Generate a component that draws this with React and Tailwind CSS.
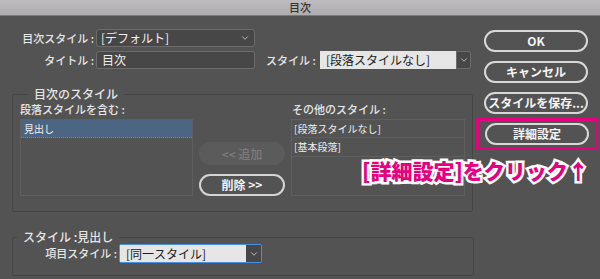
import { ChevronDown } from 'lucide-react';

const jp = { fontFamily: '"Noto Sans CJK JP", "Noto Sans", sans-serif' };

function RoundButton({ children, disabled }) {
  if (disabled) {
    return (
      <div className="w-[86px] h-[23px] rounded-full bg-[#5b5b5b] flex items-center justify-center text-[12px] text-[#7c7c7c] font-medium">
        {children}
      </div>
    );
  }
  return (
    <div className="w-[86px] h-[22px] rounded-full border-2 border-[#d4d4d4] flex items-center justify-center text-[12px] text-[#f2f2f2] font-bold">
      {children}
    </div>
  );
}

function SideButton({ children }) {
  return (
    <div className="w-[104px] h-[22px] rounded-full border-2 border-[#d8d8d8] flex items-center justify-center text-[12px] text-[#f4f4f4] font-bold whitespace-nowrap">
      {children}
    </div>
  );
}

export default function App() {
  return (
    <div style={jp} className="relative w-[600px] h-[279px] bg-[#535353] overflow-hidden text-[#e6e6e6]">
      {/* title bar */}
      <div className="h-[16px] bg-gradient-to-b from-[#bebcbe] to-[#aeacae] border-b border-[#7a7a7a] flex items-center justify-center text-[11px] text-[#333] font-medium leading-none">
        目次
      </div>

      <div className="flex">
        {/* left column */}
        <div className="w-[476px] pl-[12px] pt-[13px]">
          <div className="flex items-center h-[18px]">
            <div className="w-[82px] text-right text-[11px] font-medium leading-none whitespace-nowrap">目次スタイル :</div>
            <div className="ml-[2px] w-[159px] h-[18px] rounded-[3px] border border-[#6c6c6c] bg-[#474747] flex items-center pl-[4px] pr-[4px] text-[12px] text-[#f0f0f0] leading-none">
              <span className="flex-1">[デフォルト]</span>
              <ChevronDown size={10} strokeWidth={2} className="text-[#cfcfcf]" />
            </div>
          </div>

          <div className="flex items-center h-[18px] mt-[4px]">
            <div className="w-[82px] text-right text-[11px] font-medium leading-none whitespace-nowrap">タイトル :</div>
            <div className="ml-[2px] w-[159px] h-[18px] rounded-[3px] border border-[#6c6c6c] bg-[#474747] flex items-center pl-[5px] text-[12px] text-[#f0f0f0] leading-none">
              目次
            </div>
            <div className="ml-[11px] text-[11px] font-medium leading-none w-[54px] whitespace-nowrap">スタイル :</div>
            <div className="flex h-[18px]">
              <div className="w-[136px] h-[18px] bg-[#e6e6e6] flex items-center pl-[6px] text-[12px] text-[#222] leading-none">
                [段落スタイルなし]
              </div>
              <div className="w-[15px] h-[18px] bg-[#474747] border border-[#6c6c6c] rounded-r-[3px] flex items-center justify-center">
                <ChevronDown size={10} strokeWidth={2} className="text-[#cfcfcf]" />
              </div>
            </div>
          </div>

          {/* group 1 */}
          <fieldset className="mt-[19px] w-[460px] h-[124px] border border-[#454545] rounded-[2px] pl-[7px] pr-[7px]">
            <legend className="ml-[8px] px-[6px] text-[12px] font-medium leading-[12px]">目次のスタイル</legend>
            <div className="flex mt-[4px]">
              <div className="w-[173px]">
                <div className="text-[11px] font-medium leading-none h-[15px] whitespace-nowrap">段落スタイルを含む :</div>
                <div className="h-[77px] border border-[#5f5f5f] bg-[#535353]">
                  <div className="h-[18px] bg-[#4b6582] border-b border-dotted border-[#6c86a3] flex items-center pl-[3px] text-[10px] text-[#f2f2f2] leading-none">
                    見出し
                  </div>
                </div>
              </div>
              <div className="w-[98px] flex flex-col items-center pt-[38px] gap-[9px]">
                <RoundButton disabled>&lt;&lt; 追加</RoundButton>
                <RoundButton>削除 &gt;&gt;</RoundButton>
              </div>
              <div className="w-[174px]">
                <div className="text-[11px] font-medium leading-none h-[15px] pl-[1px] whitespace-nowrap">その他のスタイル :</div>
                <div className="h-[77px] border border-[#5f5f5f] bg-[#535353]">
                  <div className="h-[18px] border-b border-[#5f5f5f] flex items-center pl-[2px] text-[10px] text-[#f0f0f0] leading-none">
                    [段落スタイルなし]
                  </div>
                  <div className="h-[19px] border-b border-[#5f5f5f] flex items-center pl-[2px] text-[10px] text-[#f0f0f0] leading-none">
                    [基本段落]
                  </div>
                </div>
              </div>
            </div>
          </fieldset>

          {/* group 2 */}
          <fieldset className="mt-[19px] w-[462px] h-[45px] border border-[#454545] rounded-[2px]">
            <legend className="ml-[4px] px-[6px] text-[12px] font-medium leading-[12px]">スタイル :見出し</legend>
            <div className="flex items-center mt-[1px]">
              <div className="w-[104px] text-right text-[11px] font-medium leading-none whitespace-nowrap">項目スタイル :</div>
              <div className="ml-[2px] flex h-[19px] border border-[#4a90e2] rounded-[2px]">
                <div className="w-[126px] bg-[#e6e6e6] flex items-center pl-[6px] text-[12px] text-[#222] leading-none">
                  [同一スタイル]
                </div>
                <div className="w-[15px] bg-[#474747] flex items-center justify-center">
                  <ChevronDown size={10} strokeWidth={2} className="text-[#cfcfcf]" />
                </div>
              </div>
            </div>
          </fieldset>
        </div>

        {/* right column */}
        <div className="pl-[8px] pt-[14px] flex flex-col gap-[9px]">
          <SideButton>OK</SideButton>
          <SideButton>キャンセル</SideButton>
          <SideButton>スタイルを保存...</SideButton>
          <div className="-mt-[5px] -ml-[8px] w-[122px] h-[32px] border-[3px] border-[#e4007f] flex items-center justify-center">
            <SideButton>詳細設定</SideButton>
          </div>
        </div>
      </div>

      {/* annotation */}
      <div className="absolute left-[362px] top-[160px] text-[21px] font-black text-[#e4007f] leading-none [-webkit-text-stroke:5px_#ffffff] [paint-order:stroke_fill]">
        [詳細設定]をクリック↑
      </div>
    </div>
  );
}
